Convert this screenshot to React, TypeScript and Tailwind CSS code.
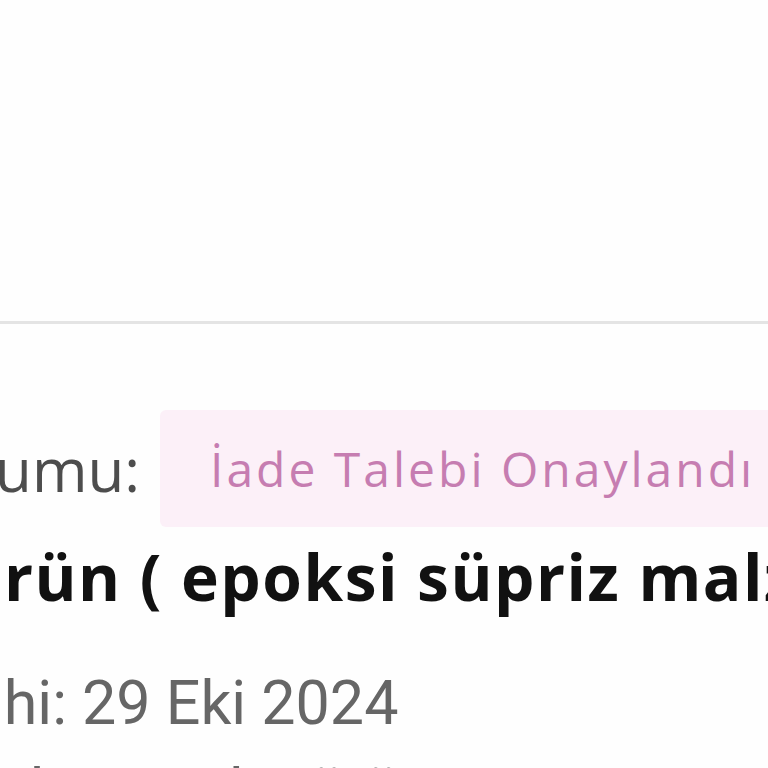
import React from "react";

export default function App() {
  return (
    <div className="w-[768px] h-[768px] overflow-hidden bg-[#fefefe] flex flex-col">
      <div className="h-[321px] shrink-0" />
      <div className="h-[3px] shrink-0 bg-[#e4e4e4]" />
      <div className="mt-[86px] flex items-center whitespace-nowrap">
        <div className="w-[140px] shrink-0 flex justify-end overflow-hidden">
          <span className="text-[60px] leading-none text-[#4d4d4d] font-['Open_Sans',sans-serif]">
            Durumu:
          </span>
        </div>
        <div className="ml-[20px] h-[117px] shrink-0 flex items-center pl-[50px] pr-[48px] bg-[#fcf0f8] rounded-[6px]">
          <span className="text-[48px] leading-none tracking-[3px] text-[#c67db1] font-['Open_Sans',sans-serif]">
            İade Talebi Onaylandı
          </span>
        </div>
      </div>
      <div className="mt-[2px] ml-[-46px] whitespace-nowrap text-[64px] leading-[96px] tracking-[1.5px] font-bold text-[#111] font-['Open_Sans',sans-serif]">
        Ürün ( epoksi süpriz malzeme seti )
      </div>
      <div className="mt-[36px] ml-[-98px] whitespace-nowrap text-[61px] leading-[84px] text-[#666] font-['Roboto',sans-serif]">
        Tarihi: 29 Eki 2024
      </div>
      <div className="mt-[4px] ml-[-30px] whitespace-nowrap text-[61px] leading-[84px] text-[#666] font-['Roboto',sans-serif]">
        Adet: 1 adet ürün
      </div>
    </div>
  );
}
